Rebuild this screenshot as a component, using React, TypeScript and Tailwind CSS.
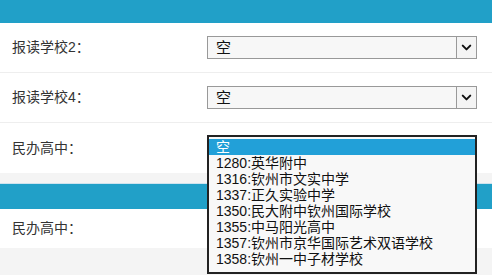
import { ChevronDown } from "lucide-react";

const font = { fontFamily: '"Liberation Sans", "Noto Sans CJK SC", sans-serif' };

const options = [
  "空",
  "1280:英华附中",
  "1316:钦州市文实中学",
  "1337:正久实验中学",
  "1350:民大附中钦州国际学校",
  "1355:中马阳光高中",
  "1357:钦州市京华国际艺术双语学校",
  "1358:钦州一中子材学校",
];

const Select = () => (
  <div className="flex h-[23px] w-[270px] items-stretch border border-[#999] bg-[#f7f7f7]">
    <span className="flex-1 pl-2 text-[15px] leading-[21px] text-[#111]">空</span>
    <span className="flex w-[20px] items-center justify-center border-l border-[#999] bg-[#f4f4f4]">
      <ChevronDown size={15} strokeWidth={3.2} className="text-[#111]" />
    </span>
  </div>
);

const Row = ({ label, children, last }: { label: string; children?: React.ReactNode; last?: boolean }) => (
  <div className={`flex h-[50px] items-center justify-between pl-3 pr-[15px] ${last ? "" : "border-b border-[#eee]"}`}>
    <span className="text-[14px] text-[#333]">{label}</span>
    {children}
  </div>
);

export default function App() {
  return (
    <div className="relative h-[275px] w-[492px] overflow-hidden bg-white" style={font}>
      {/* TOP BAR */}
      <div className="h-[23px] bg-[#21a0c8]" />

      <Row label="报读学校2：">
        <Select />
      </Row>
      <Row label="报读学校4：">
        <Select />
      </Row>
      <Row label="民办高中：" last />

      {/* GAP + SECOND SECTION */}
      <div className="h-[10px] bg-[#f4f4f4]" />
      <div className="h-px bg-[#cfe3ee]" />
      <div className="h-[25px] bg-[#21a0c8]" />
      <div className="flex h-[39px] items-center pl-3">
        <span className="text-[14px] text-[#333]">民办高中：</span>
      </div>
      <div className="h-[28px] bg-[#f4f4f4]" />

      {/* OPEN DROPDOWN */}
      <div className="absolute left-[207px] top-[135px] w-[270px] border-2 border-[#222] bg-[#f8f8f8] pt-[2px] pb-[5px]">
        {options.map((o, i) => (
          <div
            key={o}
            className={`h-[16px] pl-[7px] text-[14px] leading-[16px] ${i === 0 ? "bg-[#22a0d8] text-white" : "text-[#111]"}`}
          >
            {o}
          </div>
        ))}
      </div>
    </div>
  );
}
